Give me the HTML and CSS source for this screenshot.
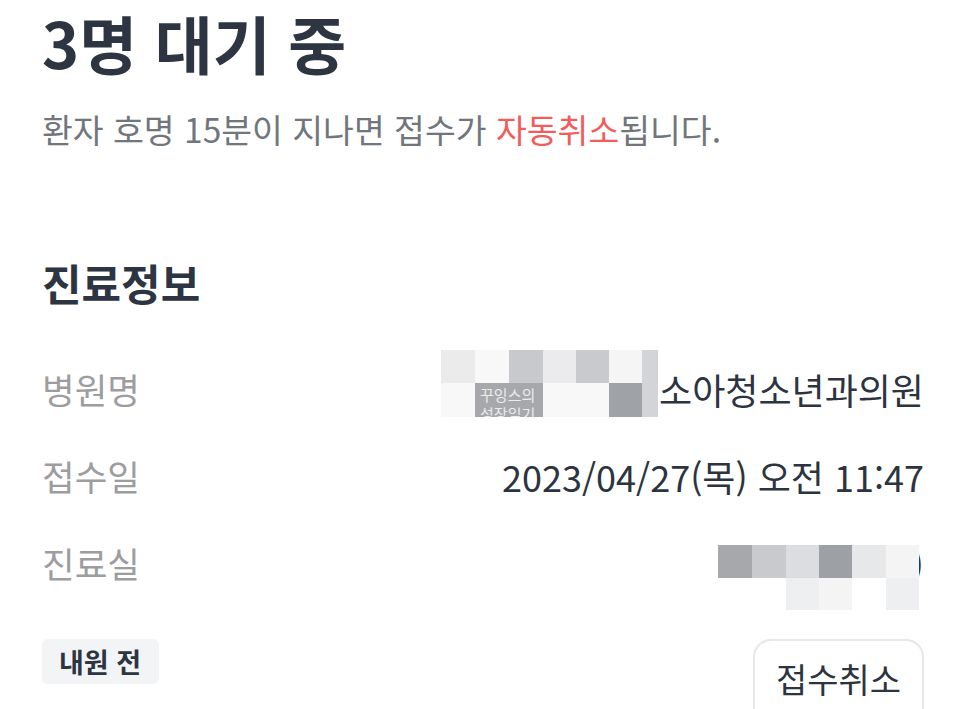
FILE: index.html
```html
<!DOCTYPE html>
<html lang="ko">
<head>
<meta charset="utf-8">
<link rel="stylesheet" href="styles.css">
</head>
<body>
<main class="page">
  <h1 class="title">3명 대기 중</h1>
  <p class="notice">환자 호명 15분이 지나면 접수가 <span class="warn">자동취소</span>됩니다.</p>

  <h2 class="section">진료정보</h2>

  <div class="row">
    <span class="label">병원명</span>
    <span class="value">
      <span class="mosaic m1">
        <i class="c1"></i><i class="c2"></i><i class="c3"></i><i class="c4"></i><i class="c5"></i><i class="c6"></i><i class="c7"></i>
        <i class="c2"></i><i class="tag">꾸잉스의 성장일기</i><i class="c2"></i><i class="c2"></i><i class="c8"></i><i class="c7"></i>
      </span>
      <span>소아청소년과의원</span>
    </span>
  </div>

  <div class="row">
    <span class="label">접수일</span>
    <span class="value">2023/04/27(목) 오전 11:47</span>
  </div>

  <div class="row">
    <span class="label">진료실</span>
    <span class="value">
      <span class="mosaic m2">
        <i class="d1"></i><i class="d2"></i><i class="d3"></i><i class="d4"></i><i class="d5"></i><i class="d6"></i>
        <i class="d0"></i><i class="d0"></i><i class="d7"></i><i class="d6"></i><i class="d0"></i><i class="d7"></i>
      </span>
      <span class="paren">)</span>
    </span>
  </div>

  <div class="actions">
    <span class="badge">내원 전</span>
    <button class="cancel" type="button">접수취소</button>
  </div>
</main>
</body>
</html>
```

FILE: styles.css
```css
* { box-sizing: border-box; }
html, body { margin: 0; padding: 0; background: #ffffff; }
body {
  font-family: "Noto Sans CJK KR", "Noto Sans", sans-serif;
  color: #2c3440;
  overflow: hidden;
}
.page {
  padding: 4px 42px 0 42px;
  display: flex;
  flex-direction: column;
}
.title {
  margin: 0;
  font-size: 63px;
  line-height: 76px;
  font-weight: 700;
  color: #2c3541;
}
.notice {
  margin: 27px 0 0 0;
  font-size: 33.5px;
  line-height: 44px;
  font-weight: 400;
  color: #71767d;
}
.warn { color: #f25c5c; }
.section {
  margin: 104px 0 0 0;
  font-size: 43px;
  line-height: 54px;
  font-weight: 700;
  color: #2c3541;
}
.row {
  height: 87px;
  display: flex;
  justify-content: space-between;
  align-items: center;
}
.section + .row { margin-top: 36px; }
.label {
  font-size: 35.5px;
  line-height: 48px;
  color: #9d9d9f;
}
.value {
  display: flex;
  align-items: center;
  font-size: 36px;
  line-height: 48px;
  color: #2c3440;
}
.mosaic {
  display: grid;
  position: relative;
  z-index: 1;
}
.mosaic i { display: block; font-style: normal; }
.m1 {
  grid-template-columns: 34px 34px 34px 33px 33px 33px 16px;
  grid-template-rows: 33px 34px;
  margin-bottom: 10px;
  margin-right: 1px;
}
.m1 .c1 { background: #ebebec; }
.m1 .c2 { background: #f8f8f8; }
.m1 .c3 { background: #c8c9cc; }
.m1 .c4 { background: #ebebed; }
.m1 .c5 { background: #c9cacd; }
.m1 .c6 { background: #f5f5f6; }
.m1 .c7 { background: #d3d4d7; }
.m1 .c8 { background: #9fa2a6; }
.m1 .tag {
  grid-column: span 2;
  background: #a6a8ac;
  color: #ececee;
  font-size: 15px;
  line-height: 19px;
  padding: 2px 0 0 5px;
  overflow: hidden;
  width: 68px;
  height: 34px;
}
.m2 {
  grid-template-columns: 34px 34px 33px 33px 34px 33px;
  grid-template-rows: 33px 32px;
  margin-top: 30px;
}
.m2 .d0 { background: #ffffff; }
.m2 .d1 { background: #a6a8ab; }
.m2 .d2 { background: #c9cacd; }
.m2 .d3 { background: #dcdde0; }
.m2 .d4 { background: #9da1a6; }
.m2 .d5 { background: #e7e8ea; }
.m2 .d6 { background: #f4f4f5; }
.m2 .d7 { background: #eeeff1; }
.paren { margin-left: -7px; }
.actions {
  margin-top: 33px;
  display: flex;
  justify-content: space-between;
  align-items: flex-start;
}
.badge {
  height: 45px;
  padding: 0 18px 0 17px;
  border-radius: 6px;
  background: #f3f4f6;
  font-size: 27px;
  line-height: 45px;
  font-weight: 700;
  color: #2c3541;
}
.cancel {
  width: 171px;
  height: 92px;
  padding: 15px 0 0 0;
  border: 2px solid #e6e8eb;
  border-radius: 18px;
  background: #ffffff;
  font-family: "Noto Sans CJK KR", "Noto Sans", sans-serif;
  font-size: 34px;
  line-height: 46px;
  color: #2c3440;
  display: flex;
  justify-content: center;
  align-items: flex-start;
}
```
